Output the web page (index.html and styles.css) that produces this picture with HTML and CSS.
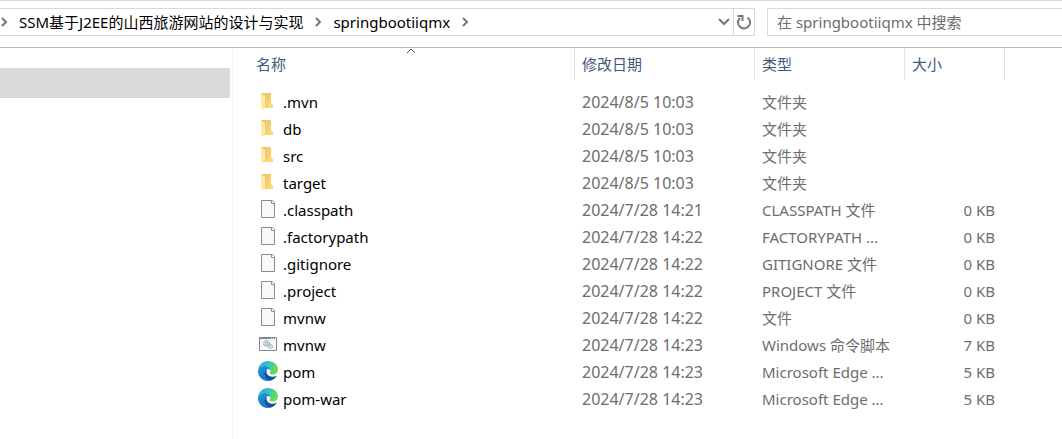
FILE: index.html
```html
<!DOCTYPE html>
<html lang="zh-CN">
<head>
    <meta charset="UTF-8">
    <meta name="viewport" content="width=device-width, initial-scale=1.0">
    <title>springbootiiqmx</title>
    <link rel="stylesheet" href="styles.css">
</head>
<body>
    <!-- Address bar and search -->
    <header class="toolbar">
        <div class="address">
            <nav class="crumbs" aria-label="路径">
                <svg class="chevron" viewBox="0 0 8 10"><path d="M2 1l4 4-4 4"/></svg>
                <a href="#">SSM基于J2EE的山西旅游网站的设计与实现</a>
                <svg class="chevron" viewBox="0 0 8 10"><path d="M2 1l4 4-4 4"/></svg>
                <a href="#">springbootiiqmx</a>
                <svg class="chevron" viewBox="0 0 8 10"><path d="M2 1l4 4-4 4"/></svg>
            </nav>
            <button class="history" type="button" aria-label="以前的位置">
                <svg viewBox="0 0 12 8"><path d="M1 1l5 5 5-5"/></svg>
            </button>
            <button class="refresh" type="button" aria-label="刷新">
                <svg viewBox="0 0 16 16"><path d="M11.500 3.500a6 6 0 1 1-7.500.500"/><path d="M1.500 2h5v5"/></svg>
            </button>
        </div>
        <input class="search" type="search" aria-label="搜索" placeholder="在 springbootiiqmx 中搜索">
    </header>

    <div class="content">
        <aside class="sidebar">
            <div class="selected"></div>
        </aside>

        <main class="files">
            <table>
                <colgroup>
                    <col class="col-name">
                    <col class="col-date">
                    <col class="col-type">
                    <col class="col-size">
                </colgroup>
                <thead>
                    <tr>
                        <th>
                            <button type="button">名称</button>
                            <svg class="sort" viewBox="0 0 10 6"><path d="M1 5l4-4 4 4"/></svg>
                        </th>
                        <th><button type="button">修改日期</button></th>
                        <th><button type="button">类型</button></th>
                        <th><button type="button">大小</button></th>
                    </tr>
                </thead>
                <tbody>
                    <tr>
                        <td><div class="name"><svg class="icon"><use href="#folder"/></svg>.mvn</div></td>
                        <td class="date">2024/8/5 10:03</td>
                        <td>文件夹</td>
                        <td></td>
                    </tr>
                    <tr>
                        <td><div class="name"><svg class="icon"><use href="#folder"/></svg>db</div></td>
                        <td class="date">2024/8/5 10:03</td>
                        <td>文件夹</td>
                        <td></td>
                    </tr>
                    <tr>
                        <td><div class="name"><svg class="icon"><use href="#folder"/></svg>src</div></td>
                        <td class="date">2024/8/5 10:03</td>
                        <td>文件夹</td>
                        <td></td>
                    </tr>
                    <tr>
                        <td><div class="name"><svg class="icon"><use href="#folder"/></svg>target</div></td>
                        <td class="date">2024/8/5 10:03</td>
                        <td>文件夹</td>
                        <td></td>
                    </tr>
                    <tr>
                        <td><div class="name"><svg class="icon"><use href="#page"/></svg>.classpath</div></td>
                        <td class="date">2024/7/28 14:21</td>
                        <td>CLASSPATH 文件</td>
                        <td>0 KB</td>
                    </tr>
                    <tr>
                        <td><div class="name"><svg class="icon"><use href="#page"/></svg>.factorypath</div></td>
                        <td class="date">2024/7/28 14:22</td>
                        <td>FACTORYPATH ...</td>
                        <td>0 KB</td>
                    </tr>
                    <tr>
                        <td><div class="name"><svg class="icon"><use href="#page"/></svg>.gitignore</div></td>
                        <td class="date">2024/7/28 14:22</td>
                        <td>GITIGNORE 文件</td>
                        <td>0 KB</td>
                    </tr>
                    <tr>
                        <td><div class="name"><svg class="icon"><use href="#page"/></svg>.project</div></td>
                        <td class="date">2024/7/28 14:22</td>
                        <td>PROJECT 文件</td>
                        <td>0 KB</td>
                    </tr>
                    <tr>
                        <td><div class="name"><svg class="icon"><use href="#page"/></svg>mvnw</div></td>
                        <td class="date">2024/7/28 14:22</td>
                        <td>文件</td>
                        <td>0 KB</td>
                    </tr>
                    <tr>
                        <td><div class="name"><svg class="icon"><use href="#script"/></svg>mvnw</div></td>
                        <td class="date">2024/7/28 14:23</td>
                        <td>Windows 命令脚本</td>
                        <td>7 KB</td>
                    </tr>
                    <tr>
                        <td><div class="name"><svg class="icon"><use href="#edge"/></svg>pom</div></td>
                        <td class="date">2024/7/28 14:23</td>
                        <td>Microsoft Edge ...</td>
                        <td>5 KB</td>
                    </tr>
                    <tr>
                        <td><div class="name"><svg class="icon"><use href="#edge"/></svg>pom-war</div></td>
                        <td class="date">2024/7/28 14:23</td>
                        <td>Microsoft Edge ...</td>
                        <td>5 KB</td>
                    </tr>
                </tbody>
            </table>
        </main>
    </div>

    <!-- File type icons -->
    <svg class="sprite" aria-hidden="true">
        <defs>
            <linearGradient id="folderBack" x1="0" y1="0" x2="1" y2="1">
                <stop offset="0" stop-color="#e9c35c"/>
                <stop offset="1" stop-color="#fbdc7d"/>
            </linearGradient>
            <linearGradient id="edgeTop" x1="0" y1="0" x2="1" y2="0.4">
                <stop offset="0" stop-color="#2aa7d8"/>
                <stop offset="0.5" stop-color="#35c1c8"/>
                <stop offset="1" stop-color="#6bdc54"/>
            </linearGradient>
            <linearGradient id="edgeLeft" x1="0" y1="0" x2="0.6" y2="1">
                <stop offset="0" stop-color="#1b9de2"/>
                <stop offset="1" stop-color="#0f6fcb"/>
            </linearGradient>
        </defs>
        <symbol id="folder" viewBox="0 0 20 20">
            <path d="M3 2h10v10l2 2v3H3z" fill="url(#folderBack)"/>
            <path d="M3 2l4 3v11l-1 2.500-3-2z" fill="#ffe8a3"/>
        </symbol>
        <symbol id="page" viewBox="0 0 20 20">
            <path d="M3.500 1.500h11l2 2v15h-13z" fill="#f8f9f9" stroke="#8c8c8c"/>
            <path d="M13.500 1.500v3h3" fill="#fff" stroke="#8c8c8c"/>
        </symbol>
        <symbol id="script" viewBox="0 0 20 20">
            <path d="M1.500 3.500h17v13h-17z" fill="#f8f9fa" stroke="#85878a"/>
            <path d="M1 4.500h18" stroke="#85878a"/>
            <path d="M13 4.500h1m1 0h1m1 0h1" stroke="#fff"/>
            <circle cx="8.500" cy="9.500" r="2.800" fill="#e6e8ea" stroke="#777" stroke-dasharray="1.500 0.700"/>
            <circle cx="8.500" cy="9.500" r="1" fill="#fff" stroke="#888" stroke-width="0.700"/>
            <circle cx="12.500" cy="12.500" r="2" fill="#e3f0f7" stroke="#669ab5" stroke-dasharray="1.300 0.600"/>
            <circle cx="12.500" cy="12.500" r="0.600" fill="#669ab5"/>
        </symbol>
        <symbol id="edge" viewBox="0 0 20 20">
            <path d="M0 9.500C.5 4 4.700 0 10 0c6 0 10 4 10 8.500 0 3.300-2.500 5-5 5-2 0-3.500-.8-3.500-1.600 0-.5.9-.9.9-2.400C12.400 7 9.500 5 6.500 5 3.300 5 .8 7 0 9.500z" fill="url(#edgeTop)"/>
            <path d="M0 9.500C.8 7 3.300 5 6.500 5c3.300 0 5.900 2 5.900 4.500C11.500 8.300 10.300 8 9.500 8 7.500 8.600 6 10.400 6 12.800c0 3.600 2.700 6.700 6.500 6.900-.8.200-1.600.3-2.500.3C4.300 20 0 15.500 0 10z" fill="url(#edgeLeft)"/>
            <path d="M9.500 8C7.500 8.600 6 10.400 6 12.800c0 3.600 2.700 6.700 6.500 6.900 2.500-.6 4.700-2.100 6.100-4.400.2-.4-.1-.6-.4-.4-1 .5-2.100.8-3.400.8-3.600 0-6.300-2.200-6.300-5 0-1.100.4-2 1-2.700z" fill="#14529a"/>
        </symbol>
    </svg>
</body>
</html>
```

FILE: styles.css
```css
* {
    box-sizing: border-box;
}

body {
    margin: 0;
    min-height: 100vh;
    display: flex;
    flex-direction: column;
    background: #fff;
    border-top: 1px solid #d9d9d9;
    font-family: "Noto Sans", "Noto Sans CJK SC", sans-serif;
    font-size: 15px;
    line-height: 20px;
    color: #000;
}

button {
    border: none;
    background: none;
    padding: 0;
    font: inherit;
    color: inherit;
}

svg {
    display: block;
    flex: none;
    fill: none;
}

/* Toolbar */
.toolbar {
    display: flex;
    gap: 12px;
    padding: 7px 0 11px;
    border-bottom: 1px solid #b9b9b9;
}

.address {
    flex: 1;
    display: flex;
    height: 28px;
    border: 1px solid #d9d9d9;
    border-left: none;
}

.crumbs {
    flex: 1;
    display: flex;
    align-items: center;
    gap: 11px;
    white-space: nowrap;
}

.crumbs a {
    color: #000;
    text-decoration: none;
}

.chevron {
    width: 8px;
    height: 10px;
    stroke: #777;
    stroke-width: 2;
}

.history {
    width: 18px;
    display: flex;
    align-items: center;
    justify-content: center;
}

.history svg {
    width: 12px;
    height: 8px;
    stroke: #777;
    stroke-width: 2;
}

.refresh {
    width: 21px;
    display: flex;
    align-items: center;
    justify-content: center;
    border-left: 1px solid #d9d9d9;
}

.refresh svg {
    width: 16px;
    height: 16px;
    stroke: #777;
    stroke-width: 2;
}

.search {
    width: 295px;
    height: 28px;
    padding: 0 9px;
    border: 1px solid #d9d9d9;
    border-right: none;
    border-radius: 0;
    background: #fff;
    font: inherit;
    outline: none;
}

.search::placeholder {
    color: #6d6d6d;
}

/* Content */
.content {
    flex: 1;
    display: flex;
}

.sidebar {
    width: 233px;
    padding: 20px 2px 0 0;
    border-right: 1px solid #f3f3f3;
}

.selected {
    height: 30px;
    background: #d9d9d9;
}

.files {
    flex: 1;
    padding-left: 15px;
}

table {
    table-layout: fixed;
    width: 757px;
    border-collapse: separate;
    border-spacing: 0;
}

.col-name {
    width: 327px;
}

.col-date {
    width: 180px;
}

.col-type {
    width: 150px;
}

.col-size {
    width: 100px;
}

th {
    position: relative;
    height: 32px;
    padding: 0 7px;
    border-right: 1px solid #e2e2e2;
    text-align: left;
    font-weight: normal;
    color: #43597c;
}

th:first-child {
    padding-left: 8px;
}

/* Sort arrow sits over the top edge of the column */
.sort {
    position: absolute;
    top: 0;
    left: 50%;
    width: 10px;
    height: 6px;
    margin-left: -5px;
    stroke: #555;
}

/* Space between the header and the first row */
tbody::before {
    content: "";
    display: block;
    height: 8px;
}

td {
    height: 27px;
    padding: 0 7px;
    color: #6d6d6d;
    white-space: nowrap;
}

td:first-child {
    padding-left: 10px;
    color: #000;
}

td:last-child {
    padding-right: 10px;
    text-align: right;
}

.date {
    font-size: 16px;
}

.name {
    display: flex;
    align-items: center;
    gap: 5px;
}

.icon {
    width: 20px;
    height: 20px;
    margin-bottom: 1px;
}

.sprite {
    width: 0;
    height: 0;
}
```
